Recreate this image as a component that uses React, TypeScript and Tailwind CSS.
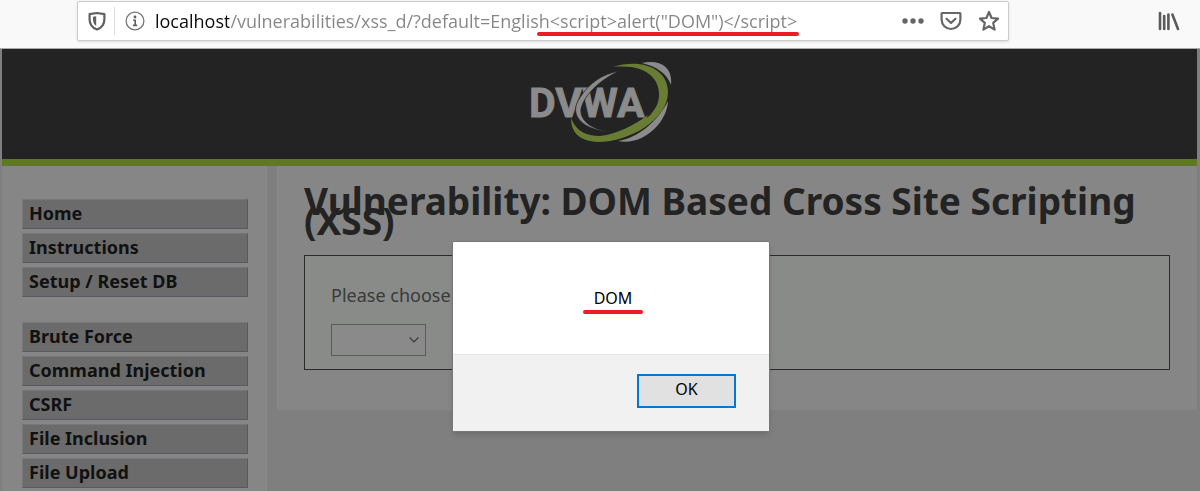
import { useState } from 'react';

const menuGroups = [
  ['Home', 'Instructions', 'Setup / Reset DB'],
  ['Brute Force', 'Command Injection', 'CSRF', 'File Inclusion', 'File Upload'],
];

function ShieldIcon() {
  return (
    <svg width="18" height="20" viewBox="0 0 18 20" fill="none">
      <path d="M9 2 L16.4 3.2 V8.5 C16.4 13.5 13 17 9 18.6 C5 17 1.6 13.5 1.6 8.5 V3.2 Z" stroke="#606060" strokeWidth="2.2" strokeLinejoin="round" />
      <path d="M8.2 5.2 V15 C6 13.6 5 11.4 5 8.5 V5.8 Z" fill="#606060" />
    </svg>
  );
}

function InfoIcon() {
  return (
    <svg width="20" height="20" viewBox="0 0 20 20" fill="none">
      <circle cx="10" cy="10" r="8.9" stroke="#757575" strokeWidth="1.3" />
      <circle cx="10" cy="6" r="1.4" fill="#606060" />
      <path d="M8.2 9.2 H10.2 V14.4 M8 14.4 H12.2" stroke="#606060" strokeWidth="1.6" />
    </svg>
  );
}

function DotsIcon() {
  return (
    <svg width="22" height="20" viewBox="0 0 22 20" fill="#666">
      <circle cx="3" cy="10" r="2.7" />
      <circle cx="11" cy="10" r="2.7" />
      <circle cx="19" cy="10" r="2.7" />
    </svg>
  );
}

function PocketIcon() {
  return (
    <svg width="22" height="20" viewBox="0 0 22 20" fill="none" stroke="#666" strokeWidth="2.2" strokeLinecap="round" strokeLinejoin="round">
      <path d="M2.2 2 H19.8 Q20.4 2 20.4 2.8 V8.6 A9.4 9.4 0 0 1 1.6 8.6 V2.8 Q1.6 2 2.2 2 Z" />
      <path d="M6.5 7.8 L11 12 L15.5 7.8" />
    </svg>
  );
}

function StarIcon() {
  return (
    <svg width="22" height="22" viewBox="0 0 22 22" fill="none" stroke="#666" strokeWidth="2.2" strokeLinejoin="round">
      <path d="M11 2 L13.6 8 L20 8.6 L15.2 12.9 L16.6 19.6 L11 16.2 L5.4 19.6 L6.8 12.9 L2 8.6 L8.4 8 Z" />
    </svg>
  );
}

function LibraryIcon() {
  return (
    <svg width="22" height="20" viewBox="0 0 22 20" fill="none" stroke="#5a5a5a" strokeWidth="2.6" strokeLinecap="round">
      <path d="M2 2 V18 M6.2 5 V18 M10.4 3.5 V18 M14.4 3.5 L20 18" />
    </svg>
  );
}

function Logo() {
  return (
    <svg width="144" height="82" viewBox="-2 0 144 82" role="img" aria-label="DVWA">
      <text x="-1" y="56" fill="#8b8b8b" stroke="#8b8b8b" strokeWidth="0.8" fontFamily="Roboto, sans-serif" fontWeight="700" fontSize="41">DVWA</text>
      <path d="M89 10 C67 14 54 28 47 42 C41 56 54 69 80 71 C60 68 50 59 51 48 C54 34 70 19 89 10 Z" fill="#8b8b8b" stroke="#232323" strokeWidth="0.8" />
      <path d="M83 6 C112 -3 138 8 138 31 C138 58 100 81 68 81 C50 80 41 72 41 57 C46 70 56 75 70 75 C88 73 104 64 118 54 C114 60 122 54 127 44 C134 26 124 2 83 6 Z" fill="#687c34" />
      <path d="M112 2 C130 -2 143 6 141 24 C137 13 128 6 112 2 Z" fill="#8b8b8b" />
      <path d="M138 40 C137 62 113 85 88 80 C108 77 128 60 138 40 Z" fill="#8b8b8b" />
    </svg>
  );
}

function Toolbar() {
  const [url, setUrl] = useState('localhost/vulnerabilities/xss_d/?default=English<script>alert("DOM")</script>');
  return (
    <div className="flex h-[49px] items-start border-b border-[#aaa] bg-[#f9f9fa] pl-[77px] pt-px">
      <div className="flex h-10 flex-1 items-center rounded-xs border border-[#ccc] bg-white pl-2.5 pr-2 shadow-sm">
        <button aria-label="Tracking protection"><ShieldIcon /></button>
        <div className="ml-2 mr-2.5 h-7 w-px bg-[#ddd]" />
        <button aria-label="Site information"><InfoIcon /></button>
        <div className="relative ml-2.5 flex-1">
          <input
            aria-label="Address"
            value={url}
            onChange={(e) => setUrl(e.target.value)}
            className="block h-8 w-full bg-[linear-gradient(90deg,#0c0c0d_74px,#858585_74px)] bg-clip-text font-['Open_Sans',sans-serif] text-lg text-transparent outline-none"
          />
          <div className="absolute left-[382px] top-[27px] h-1 w-[262px] rounded-full bg-[#ed1c24]" />
        </div>
        <div className="flex items-center gap-4">
          <button aria-label="Page actions"><DotsIcon /></button>
          <button aria-label="Save to Pocket"><PocketIcon /></button>
          <button aria-label="Bookmark this page"><StarIcon /></button>
        </div>
      </div>
      <div className="flex h-10 w-[191px] items-center justify-end pr-5">
        <button aria-label="Library"><LibraryIcon /></button>
      </div>
    </div>
  );
}

function Sidebar() {
  return (
    <nav className="flex w-[265px] shrink-0 flex-col gap-[25px] bg-[#868686] pl-5 pr-[19px] pt-[33px]">
      {menuGroups.map((group) => (
        <ul key={group[0]} className="flex flex-col gap-1">
          {group.map((item) => (
            <li key={item}>
              <a
                href="#"
                className="block h-[30px] border border-b-[#555a64] border-l-[#777] border-r-[#555a64] border-t-[#777] bg-[#6b6b6b] pl-1.5 text-lg leading-[27px] font-bold text-[#111]"
              >
                {item}
              </a>
            </li>
          ))}
        </ul>
      ))}
    </nav>
  );
}

function AlertDialog() {
  return (
    <div role="alertdialog" aria-label="DOM" className="absolute left-[452px] top-[241px] w-[318px] rounded-xs border border-[#777] bg-white text-base text-black shadow-md">
      <div className="flex h-[112px] flex-col items-center justify-end pb-10 pl-1">
        <p className="leading-6">DOM</p>
        <div className="h-1 w-[60px] rounded-full bg-[#ed1c24]" />
      </div>
      <div className="flex h-[77px] items-start justify-end border-t border-[#e4e4e4] bg-[#f1f1f1] pr-[33px] pt-[19px]">
        <button className="h-[34px] w-[99px] border-2 border-[#0078d7] bg-[#e1e1e1] pb-1">OK</button>
      </div>
    </div>
  );
}

export default function App() {
  return (
    <div className="relative flex h-screen flex-col overflow-hidden bg-[#7f7f7f] font-['Noto_Sans',sans-serif]">
      <Toolbar />
      <div className="ml-0.5 mr-[3px] flex flex-1 flex-col">
        <header className="flex h-[117px] shrink-0 justify-center border-b-[7px] border-[#5f7824] bg-[#232323] pt-3">
          <Logo />
        </header>
        <div className="flex flex-1 items-stretch gap-2.5">
          <Sidebar />
          <main className="flex-1 self-start bg-[#868686] px-[27px] pb-10 pt-[25px]">
            <h1 className="text-[37px] leading-5 font-bold text-[#232323]">
              Vulnerability: DOM Based Cross Site Scripting (XSS)
            </h1>
            <form className="mt-6 border border-[#2b2b2b] bg-[#888b88] px-[26px] pb-[13px] pt-[25px]">
              <label htmlFor="language" className="block text-lg leading-7 text-[#3a3a3a]">
                Please choose a language:
              </label>
              <div className="relative mt-[15px] w-[95px]">
                <select id="language" className="block h-8 w-full appearance-none border border-[#5a5a5a] bg-[#8a8a8a]">
                  <option></option>
                </select>
                <svg className="pointer-events-none absolute right-[7px] top-3" width="10" height="8" viewBox="0 0 10 8" fill="none">
                  <path d="M0.7 1.5 L5 5.8 L9.3 1.5" stroke="#3a3a3a" strokeWidth="1.2" />
                </svg>
              </div>
            </form>
          </main>
        </div>
      </div>
      <AlertDialog />
    </div>
  );
}
